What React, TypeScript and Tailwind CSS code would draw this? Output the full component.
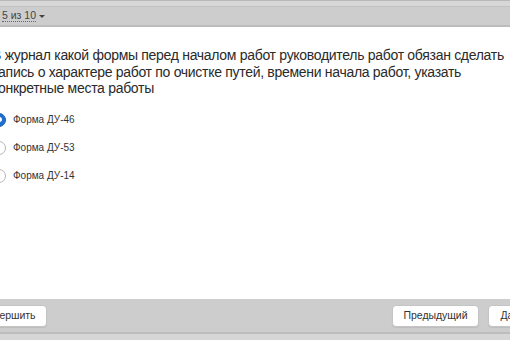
import React from "react";

export default function App() {
  const font = { fontFamily: '"Liberation Sans", Arial, sans-serif' };
  const options = ["Форма ДУ-46", "Форма ДУ-53", "Форма ДУ-14"];
  const btn =
    "h-[22px] px-[11px] bg-white rounded-[4px] border border-[#c4c4c4] shadow-[0_1px_1px_rgba(0,0,0,0.08)] text-[10.5px] tracking-[-0.05px] text-[#333] leading-none";
  return (
    <div className="w-[510px] h-[340px] overflow-hidden bg-white flex flex-col" style={font}>
      {/* top bar */}
      <div className="h-[1px] bg-[#b9b9b9]" />
      <div className="h-[5px] bg-[#d7d7d7]" />
      <div className="h-[1px] bg-[#c2c2c2]" />
      <div className="h-[18px] bg-[#cdcdcd] flex items-center pl-[2px]">
        <span className="text-[10.5px] leading-none text-[#444] border-b border-dotted border-[#666] pb-[1px]">
          5 из 10
        </span>
        <span className="ml-[3px] w-0 h-0 border-l-[3px] border-r-[3px] border-t-[3px] border-l-transparent border-r-transparent border-t-[#444]" />
      </div>
      <div className="h-[2px] bg-[#bcbcbc]" />

      {/* question */}
      <div className="flex-1 -ml-[8px] pt-[20px]">
        <p className="text-[14px] leading-[16.5px] tracking-[-0.3px] text-[#2a2a2a]">
          В журнал какой формы перед началом работ руководитель работ обязан сделать запись о характере работ по очистке путей, времени начала работ, указать конкретные места работы
        </p>
        <div className="flex flex-col gap-[14px] mt-[16px]">
          {options.map((o, i) => (
            <div key={o} className="flex items-center h-[14px]">
              {i === 0 ? (
                <div className="w-[14px] h-[14px] rounded-full bg-[#1e6fd0] border border-[#1a5fb4] flex items-center justify-center">
                  <div className="w-[5px] h-[5px] rounded-full bg-white" />
                </div>
              ) : (
                <div className="w-[14px] h-[14px] rounded-full bg-white border border-[#b5b5b5]" />
              )}
              <span className="ml-[7px] text-[10px] text-[#333]">{o}</span>
            </div>
          ))}
        </div>
      </div>

      {/* bottom bar */}
      <div className="h-[33px] bg-[#cdcdcd] flex items-center justify-between">
        <button className={`-ml-[30px] ${btn}`}>Завершить</button>
        <div className="flex gap-[9px] -mr-[41px]">
          <button className={btn}>Предыдущий</button>
          <button className={btn}>Дальше</button>
        </div>
      </div>
      <div className="h-[2px] bg-[#bdbdbd]" />
      <div className="h-[6px] bg-[#d6d6d6]" />
    </div>
  );
}
